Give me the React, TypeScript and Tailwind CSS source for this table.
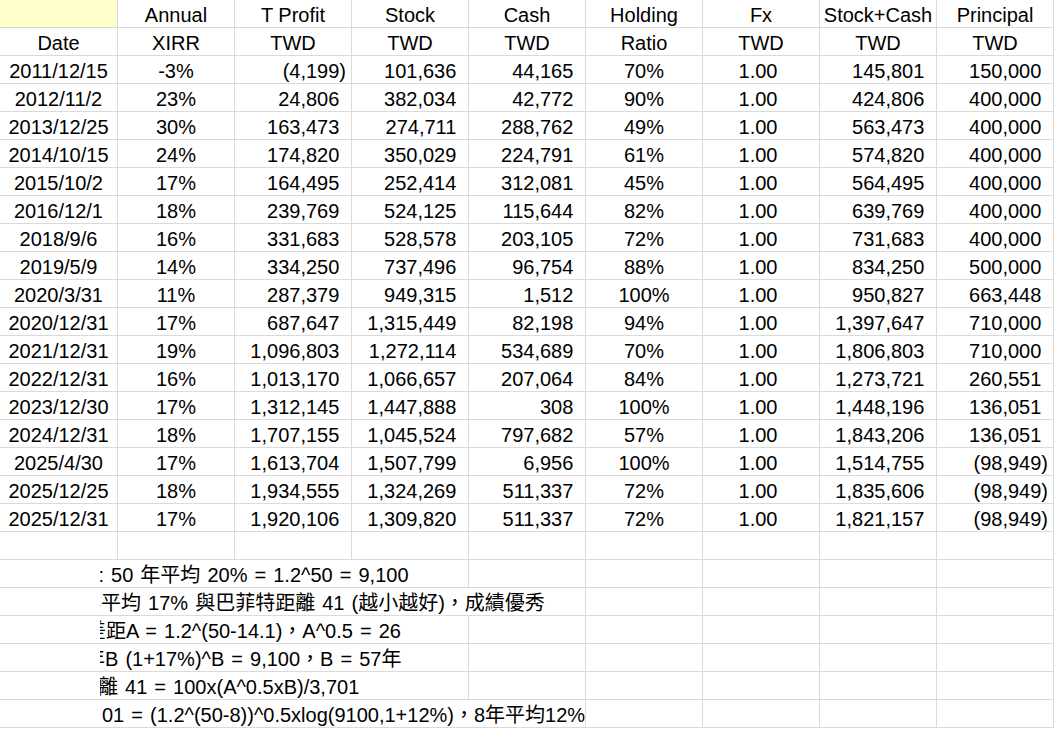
import clsx from "clsx";

const rows: string[][] = [
  ["2011/12/15", "-3%", "(4,199)", "101,636", "44,165", "70%", "1.00", "145,801", "150,000"],
  ["2012/11/2", "23%", "24,806", "382,034", "42,772", "90%", "1.00", "424,806", "400,000"],
  ["2013/12/25", "30%", "163,473", "274,711", "288,762", "49%", "1.00", "563,473", "400,000"],
  ["2014/10/15", "24%", "174,820", "350,029", "224,791", "61%", "1.00", "574,820", "400,000"],
  ["2015/10/2", "17%", "164,495", "252,414", "312,081", "45%", "1.00", "564,495", "400,000"],
  ["2016/12/1", "18%", "239,769", "524,125", "115,644", "82%", "1.00", "639,769", "400,000"],
  ["2018/9/6", "16%", "331,683", "528,578", "203,105", "72%", "1.00", "731,683", "400,000"],
  ["2019/5/9", "14%", "334,250", "737,496", "96,754", "88%", "1.00", "834,250", "500,000"],
  ["2020/3/31", "11%", "287,379", "949,315", "1,512", "100%", "1.00", "950,827", "663,448"],
  ["2020/12/31", "17%", "687,647", "1,315,449", "82,198", "94%", "1.00", "1,397,647", "710,000"],
  ["2021/12/31", "19%", "1,096,803", "1,272,114", "534,689", "70%", "1.00", "1,806,803", "710,000"],
  ["2022/12/31", "16%", "1,013,170", "1,066,657", "207,064", "84%", "1.00", "1,273,721", "260,551"],
  ["2023/12/30", "17%", "1,312,145", "1,447,888", "308", "100%", "1.00", "1,448,196", "136,051"],
  ["2024/12/31", "18%", "1,707,155", "1,045,524", "797,682", "57%", "1.00", "1,843,206", "136,051"],
  ["2025/4/30", "17%", "1,613,704", "1,507,799", "6,956", "100%", "1.00", "1,514,755", "(98,949)"],
  ["2025/12/25", "18%", "1,934,555", "1,324,269", "511,337", "72%", "1.00", "1,835,606", "(98,949)"],
  ["2025/12/31", "17%", "1,920,106", "1,309,820", "511,337", "72%", "1.00", "1,821,157", "(98,949)"],
];

const head1 = ["", "Annual", "T Profit", "Stock", "Cash", "Holding", "Fx", "Stock+Cash", "Principal"];
const head2 = ["Date", "XIRR", "TWD", "TWD", "TWD", "Ratio", "TWD", "TWD", "TWD"];

// column kinds: c = centered, r = accounting (right, room for ")")
const kinds = ["c", "c", "r", "r", "r", "c", "fx", "r", "r"];

function Cell({ i, className, children }: { i: number; className?: string; children?: React.ReactNode }) {
  return (
    <div
      className={clsx(
        "h-[28px] shrink-0 border-r border-b border-[#dadada] pt-[2px] leading-[26px] whitespace-nowrap overflow-hidden",
        i === 0 ? "w-[118px]" : "w-[117px]",
        className
      )}
    >
      {children}
    </div>
  );
}

function Value({ v, i }: { v: string; i: number }) {
  const k = kinds[i];
  if (k === "r") {
    return (
      <Cell i={i} className="text-right pr-[5px]">
        {v}
        {!v.startsWith("(") && <span className="invisible">)</span>}
      </Cell>
    );
  }
  return (
    <Cell i={i} className={clsx("text-center", k === "fx" && "pr-[6px]")}>
      {v}
    </Cell>
  );
}

// note rows: the text starts left of the visible area and runs across several cells.
// pre is the part cut off at the left edge; shift leaves only a sliver of it showing.
const notes: { pre: string; shift: string; text: string; span: string; rest: number }[] = [
  { pre: "巴菲特:", shift: "-ml-[96px]", text: " 50 年平均 20% = 1.2^50 = 9,100", span: "w-[369px]", rest: 5 },
  { pre: "年", shift: "-ml-[99px]", text: "平均 17% 與巴菲特距離 41 (越小越好)，成績優秀", span: "w-[486px]", rest: 4 },
  { pre: "差", shift: "-ml-[94px]", text: "距A = 1.2^(50-14.1)，A^0.5 = 26", span: "w-[369px]", rest: 5 },
  { pre: "年", shift: "-ml-[95px]", text: "B (1+17%)^B = 9,100，B = 57年", span: "w-[369px]", rest: 5 },
  { pre: "距離", shift: "-ml-[82px]", text: " 41 = 100x(A^0.5xB)/3,701", span: "w-[369px]", rest: 5 },
  { pre: "距離 3,7\u00a0", shift: "-ml-[98px]", text: "01 = (1.2^(50-8))^0.5xlog(9100,1+12%)，8年平均12%", span: "w-[486px]", rest: 4 },
];

export default function App() {
  return (
    <div className="w-[1054px] min-h-[729px] bg-white text-black text-[20px] font-['Liberation_Sans','Noto_Sans_CJK_TC',sans-serif]">
      {/* header */}
      <div className="flex">
        {head1.map((h, i) => (
          <Cell key={i} i={i} className={clsx("text-center", i === 0 && "bg-[#ffffcc]")}>
            {h}
          </Cell>
        ))}
      </div>
      <div className="flex">
        {head2.map((h, i) => (
          <Cell key={i} i={i} className="text-center">
            {h}
          </Cell>
        ))}
      </div>

      {/* data */}
      {rows.map((r, ri) => (
        <div key={ri} className="flex">
          {r.map((v, i) => (
            <Value key={i} v={v} i={i} />
          ))}
        </div>
      ))}

      {/* blank row */}
      <div className="flex">
        {head1.map((_, i) => (
          <Cell key={i} i={i} />
        ))}
      </div>

      {/* notes */}
      {notes.map((n, ni) => (
        <div key={ni} className="flex">
          <div className="w-[100px] h-[28px] shrink-0 border-b border-[#dadada]" />
          <div
            className={clsx(
              "h-[28px] shrink-0 border-r border-b border-[#dadada] pt-[2px] leading-[26px] whitespace-nowrap overflow-hidden [word-spacing:1.5px]",
              n.span
            )}
          >
            <span className={clsx("inline-block w-[100px] text-right whitespace-pre", n.shift)}>{n.pre}</span>
            {n.text}
          </div>
          {Array.from({ length: n.rest }).map((_, i) => (
            <Cell key={i} i={1} />
          ))}
        </div>
      ))}
    </div>
  );
}
